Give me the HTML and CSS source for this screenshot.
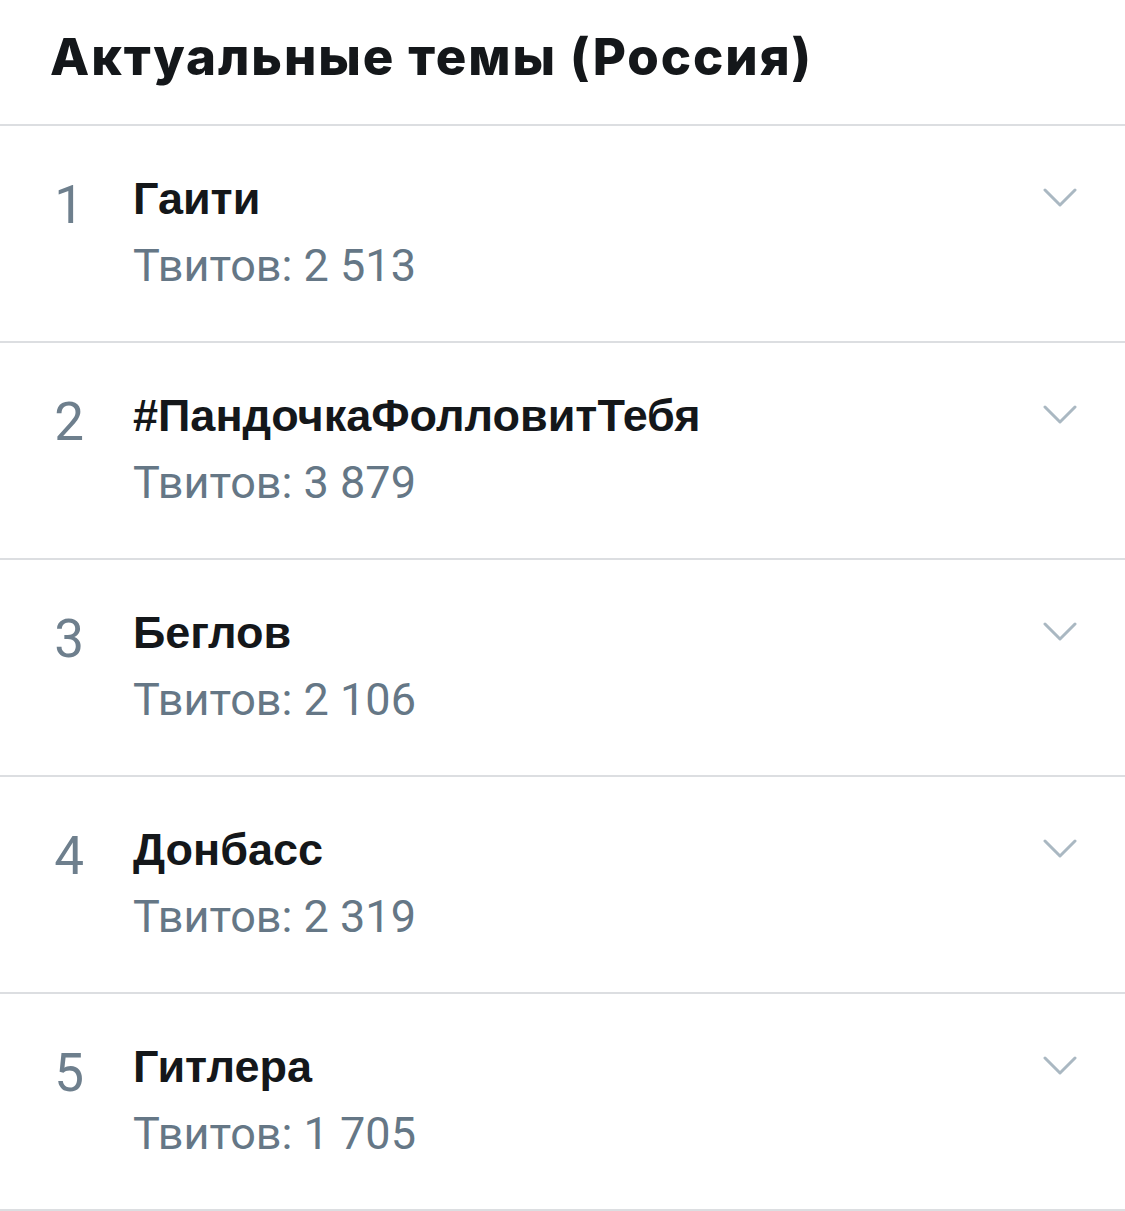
FILE: index.html
```html
<!DOCTYPE html>
<html lang="ru">
<head>
<meta charset="utf-8">
<title>Актуальные темы</title>
<link rel="stylesheet" href="styles.css">
</head>
<body>
<main class="trends">
  <header class="trends-header">
    <h1 class="trends-title">Актуальные темы (Россия)</h1>
  </header>
  <ol class="trend-list">
    <li class="trend">
      <span class="trend-rank">1</span>
      <div class="trend-body">
        <div class="trend-name">Гаити</div>
        <div class="trend-count">Твитов: 2 513</div>
      </div>
      <svg class="trend-chevron" viewBox="0 0 34 20" width="34" height="20" aria-hidden="true"><path d="M2 2 L17 17 L32 2" fill="none" stroke="#aab8c2" stroke-width="3" stroke-linecap="round" stroke-linejoin="round"/></svg>
    </li>
    <li class="trend">
      <span class="trend-rank">2</span>
      <div class="trend-body">
        <div class="trend-name">#ПандочкаФолловитТебя</div>
        <div class="trend-count">Твитов: 3 879</div>
      </div>
      <svg class="trend-chevron" viewBox="0 0 34 20" width="34" height="20" aria-hidden="true"><path d="M2 2 L17 17 L32 2" fill="none" stroke="#aab8c2" stroke-width="3" stroke-linecap="round" stroke-linejoin="round"/></svg>
    </li>
    <li class="trend">
      <span class="trend-rank">3</span>
      <div class="trend-body">
        <div class="trend-name">Беглов</div>
        <div class="trend-count">Твитов: 2 106</div>
      </div>
      <svg class="trend-chevron" viewBox="0 0 34 20" width="34" height="20" aria-hidden="true"><path d="M2 2 L17 17 L32 2" fill="none" stroke="#aab8c2" stroke-width="3" stroke-linecap="round" stroke-linejoin="round"/></svg>
    </li>
    <li class="trend">
      <span class="trend-rank">4</span>
      <div class="trend-body">
        <div class="trend-name">Донбасс</div>
        <div class="trend-count">Твитов: 2 319</div>
      </div>
      <svg class="trend-chevron" viewBox="0 0 34 20" width="34" height="20" aria-hidden="true"><path d="M2 2 L17 17 L32 2" fill="none" stroke="#aab8c2" stroke-width="3" stroke-linecap="round" stroke-linejoin="round"/></svg>
    </li>
    <li class="trend">
      <span class="trend-rank">5</span>
      <div class="trend-body">
        <div class="trend-name">Гитлера</div>
        <div class="trend-count">Твитов: 1 705</div>
      </div>
      <svg class="trend-chevron" viewBox="0 0 34 20" width="34" height="20" aria-hidden="true"><path d="M2 2 L17 17 L32 2" fill="none" stroke="#aab8c2" stroke-width="3" stroke-linecap="round" stroke-linejoin="round"/></svg>
    </li>
  </ol>
</main>
</body>
</html>
```

FILE: styles.css
```css
html, body {
  margin: 0;
  padding: 0;
  background: #ffffff;
}

body {
  font-family: "Liberation Sans", Arial, sans-serif;
  color: #14171a;
}

.trends {
  width: 1125px;
}

.trends-header {
  height: 126px;
  padding-left: 50px;
  border-bottom: 2px solid #dcdee1;
  box-sizing: border-box;
}

.trends-title {
  margin: 0;
  padding-top: 22px;
  font-family: Inter, Roboto, "Liberation Sans", sans-serif;
  font-size: 51px;
  line-height: 70px;
  font-weight: 800;
  letter-spacing: 1.9px;
  color: #14171a;
}

.trend-list {
  list-style: none;
  margin: 0;
  padding: 0;
}

.trend {
  display: flex;
  align-items: flex-start;
  height: 217px;
  box-sizing: border-box;
  border-bottom: 2px solid #dcdee1;
}

.trend-rank {
  width: 84px;
  flex: none;
  text-align: right;
  padding-top: 47px;
  font-family: Roboto, "Liberation Sans", sans-serif;
  font-weight: 400;
  font-size: 53px;
  line-height: 64px;
  color: #6e7f8d;
}

.trend-body {
  flex: 1;
  padding-left: 49px;
  padding-top: 46px;
}

.trend-name {
  font-size: 45px;
  line-height: 54px;
  font-weight: 700;
  color: #14171a;
}

.trend-count {
  margin-top: 13px;
  font-family: Roboto, "Liberation Sans", sans-serif;
  font-size: 45px;
  line-height: 54px;
  font-weight: 400;
  color: #657786;
}

.trend-chevron {
  flex: none;
  margin-top: 62px;
  margin-right: 48px;
}
```
